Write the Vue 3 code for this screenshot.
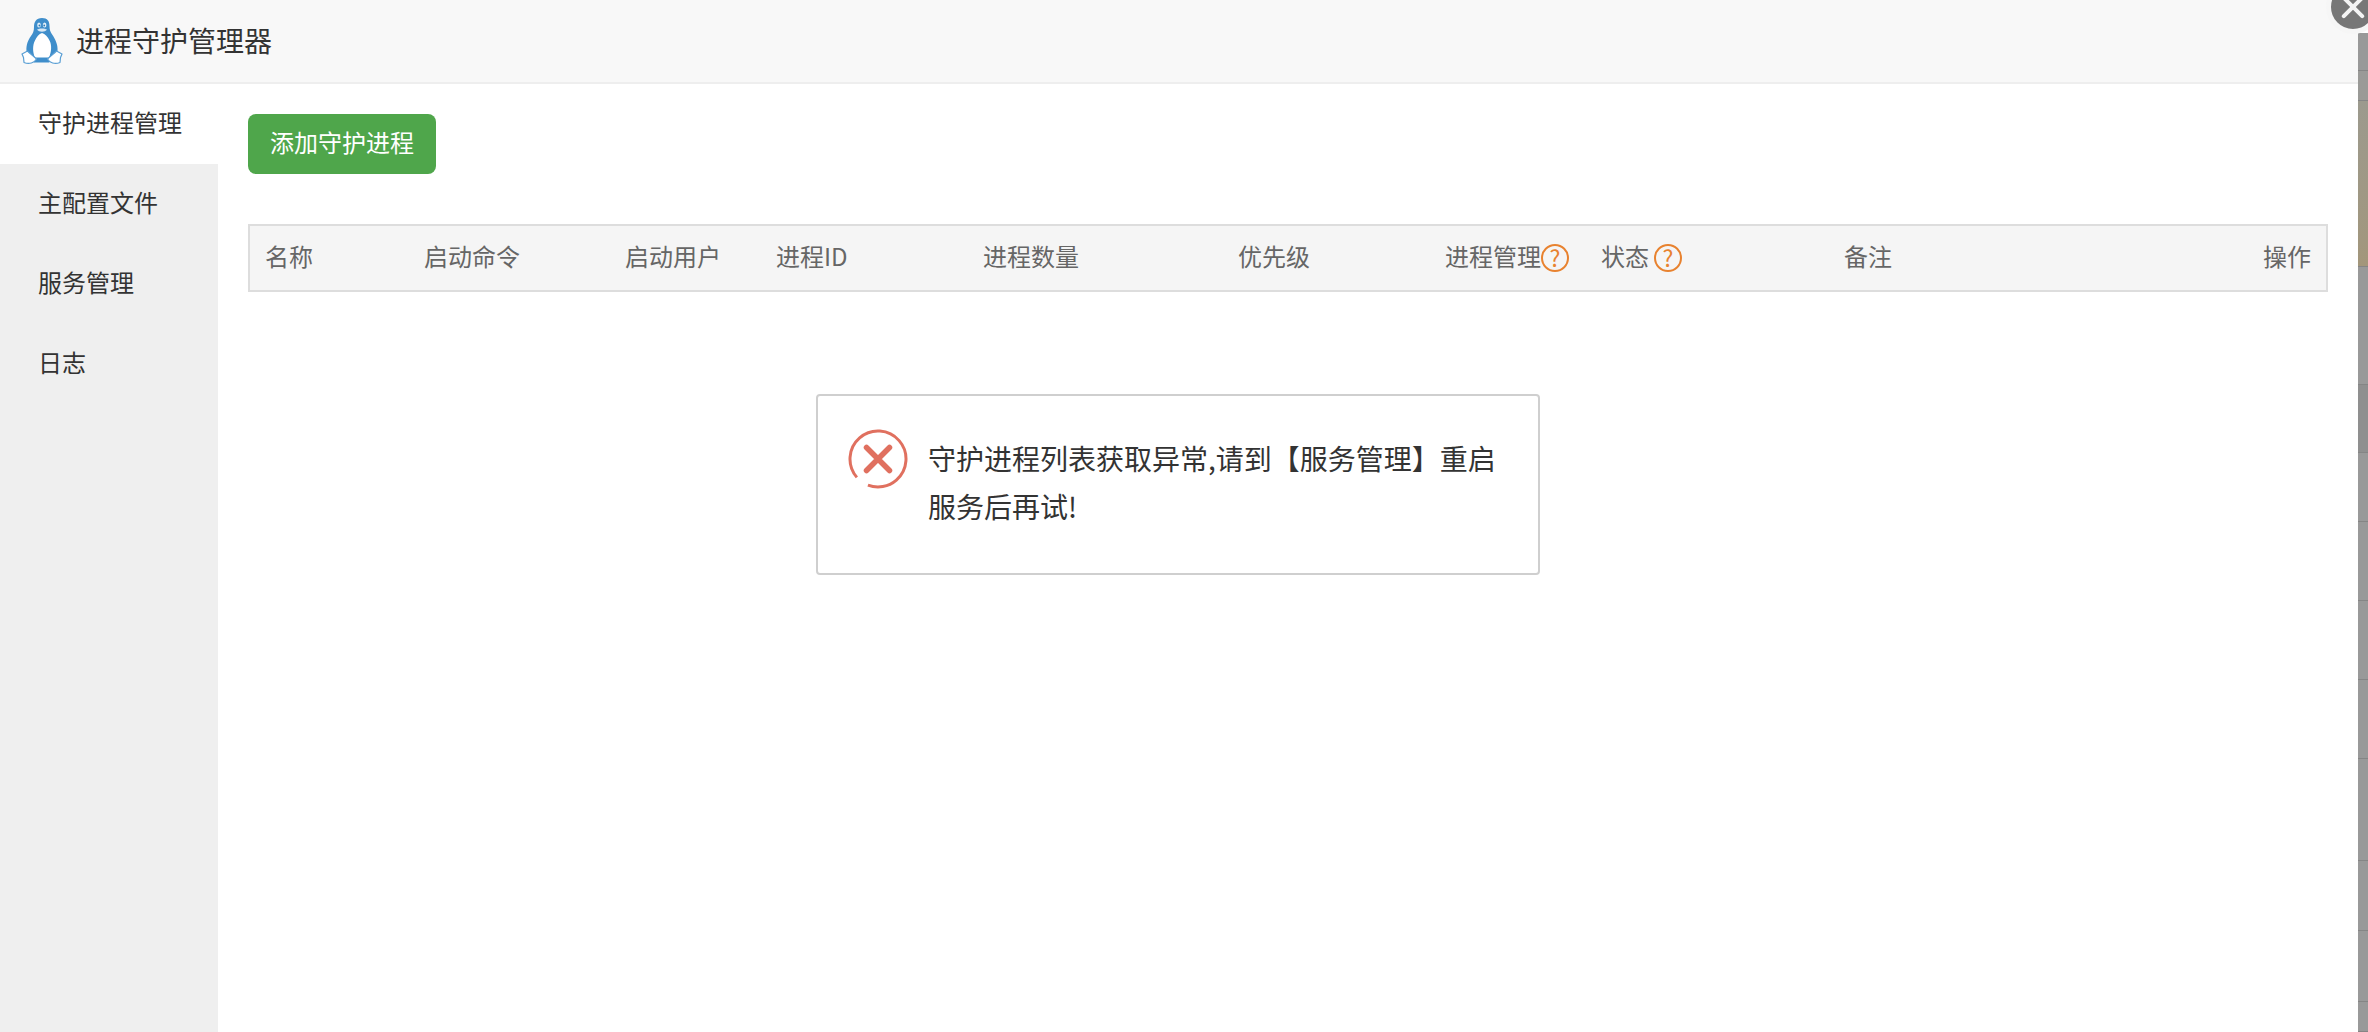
<script setup>
const menu = ['守护进程管理', '主配置文件', '服务管理', '日志']
const cols = [
  { label: '名称' },
  { label: '启动命令' },
  { label: '启动用户' },
  { label: '进程ID' },
  { label: '进程数量' },
  { label: '优先级' },
  { label: '进程管理', help: true },
  { label: '状态', help: true, gap: true },
  { label: '备注' },
  { label: '操作', right: true }
]
const strip = [
  { h: 38, c: '#999999' },
  { h: 30, c: 'linear-gradient(#9a9a98,#9a9a96)' },
  { h: 166, c: 'linear-gradient(#9c9a8e,#a1977f 85%,#a3967a)' },
  { h: 118, c: '#999999' },
  { h: 68, c: '#8f8f8f' },
  { h: 69, c: '#999999' },
  { h: 79, c: '#999999' },
  { h: 79, c: '#999999' },
  { h: 79, c: '#999999' },
  { h: 102, c: '#999999' },
  { h: 70, c: '#999999' },
  { h: 71, c: '#999999' },
  { h: 30, c: '#999999' }
]
</script>

<template>
  <div class="page">
    <div class="dialog">
      <header class="top">
        <svg class="logo" viewBox="0 0 42 48" width="42" height="48">
          <path fill="#3f8ecb" d="M21 1C15 1 13 5 13 10C13 14 12 16 10 19C7 23 5 28 5.500 34L13 45.500H28L36.500 34C37 27 34 22 31.500 18C29.500 15 28.500 13 28.500 9C28.500 4 26.500 1 21 1Z" />
          <path fill="#fff" d="M21 16C18 17 15.500 20 14 23.500C11.500 28 11.500 35 14 40.500L28 40.500C30.500 35 31 28 28.500 23.500C27 20 24 17 21 16Z" />
          <ellipse cx="18" cy="8" rx="1.800" ry="2.500" fill="#e3eff8" />
          <ellipse cx="23.600" cy="8" rx="1.800" ry="2.500" fill="#e3eff8" />
          <circle cx="18.400" cy="8.500" r="0.900" fill="#2f7cb8" />
          <circle cx="23.200" cy="8.500" r="0.900" fill="#2f7cb8" />
          <path fill="#d8e8f5" d="M16 12.500C18.500 11 23.500 11 26 12.500C24 15.500 18 15.500 16 12.500Z" />
          <path fill="#fff" stroke="#5a9fd4" stroke-width="1.200" stroke-linejoin="round" d="M1 37L6.500 34C9 36.500 13 39.500 15.500 42C13.500 46 8 47.500 3 45.500L2.500 40.500Z" />
          <path fill="#fff" stroke="#5a9fd4" stroke-width="1.200" stroke-linejoin="round" d="M41 37L35.500 34C33 36.500 29 39.500 26.500 42C28.500 46 34 47.500 39 45.500L39.500 40.500Z" />
        </svg>
        <span class="title">进程守护管理器</span>
      </header>
      <div class="body">
        <nav class="side">
          <div v-for="(m, i) in menu" :key="m" class="item" :class="{ on: i === 0 }">{{ m }}</div>
        </nav>
        <main class="main">
          <button class="add">添加守护进程</button>
          <div class="thead">
            <div v-for="c in cols" :key="c.label" class="th" :class="{ right: c.right, gap: c.gap }">
              <span class="lb">{{ c.label }}</span>
              <span v-if="c.help" class="help">?</span>
            </div>
          </div>
        </main>
      </div>
      <div class="toast">
        <svg class="err" viewBox="0 0 60 60" width="60" height="60">
          <circle cx="30" cy="30" r="28" fill="none" stroke="#e0705f" stroke-width="3" stroke-dasharray="162 14" transform="rotate(139 30 30)" />
          <path fill="none" stroke="#e0705f" stroke-width="5.500" stroke-linecap="round" d="M18.500 18.500L41.500 41.500M41.500 18.500L18.500 41.500" />
        </svg>
        <p class="msg">守护进程列表获取异常,请到【服务管理】重启服务后再试!</p>
      </div>
    </div>
    <div class="strip">
      <div v-for="(s, i) in strip" :key="i" class="seg" :style="{ height: s.h + 'px', background: s.c }"></div>
    </div>
    <div class="close"><span class="x"></span></div>
  </div>
</template>

<style>
html, body { background: #fff; overflow: hidden; }
</style>

<style scoped>
.page {
  position: relative;
  display: flex;
  width: 2368px;
  height: 1032px;
  overflow: hidden;
  font-family: "Noto Sans CJK SC", "Noto Sans", sans-serif;
  color: #333;
}
.dialog {
  position: relative;
  display: flex;
  flex-direction: column;
  width: 2358px;
  background: #fff;
}
.top {
  display: flex;
  align-items: center;
  box-sizing: border-box;
  height: 84px;
  padding-left: 21px;
  background: #f8f8f8;
  border-bottom: 2px solid #eee;
}
.logo { margin-right: 13px; }
.title { font-size: 28px; line-height: 40px; padding-bottom: 2px; }
.body { display: flex; flex: 1; }
.side { width: 218px; background: #efefef; }
.item {
  height: 80px;
  padding-left: 38px;
  font-size: 24px;
  line-height: 75px;
}
.item.on { background: #fff; }
.main { flex: 1; padding: 30px 30px 0; }
.add {
  display: block;
  width: 188px;
  height: 60px;
  padding: 0 0 5px;
  border: 0;
  border-radius: 8px;
  background: #4fa64b;
  color: #fff;
  font: inherit;
  font-size: 24px;
}
.thead {
  display: grid;
  grid-template-columns: 159px 201px 151px 207px 255px 207px 156px 243px 1fr 100px;
  align-items: center;
  box-sizing: border-box;
  height: 68px;
  margin-top: 50px;
  padding: 0 15px;
  background: #f5f5f5;
  border: 2px solid #ddd;
  color: #666;
  font-size: 24px;
}
.th { display: flex; align-items: center; }
.th.right { justify-content: flex-end; }
.th.gap .help { margin-left: 5px; }
.lb { padding-bottom: 5px; }
.help {
  display: flex;
  align-items: center;
  justify-content: center;
  box-sizing: border-box;
  width: 28px;
  height: 28px;
  padding-bottom: 1px;
  border: 2px solid #e8822f;
  border-radius: 50%;
  color: #e8822f;
  font-size: 23px;
  line-height: 1;
}
.toast {
  position: absolute;
  left: 816px;
  top: 394px;
  display: flex;
  box-sizing: border-box;
  width: 724px;
  height: 181px;
  padding: 33px 40px 0 30px;
  background: #fff;
  border: 2px solid #cfcfcf;
  border-radius: 4px;
}
.err { flex: none; margin-right: 20px; }
.msg {
  margin: 5px 0 0;
  font-size: 28px;
  line-height: 48px;
  color: #333;
}
.strip { width: 10px; margin-top: 33px; }
.seg { box-sizing: border-box; border-bottom: 1px solid #858585; }
.close {
  position: absolute;
  left: 2326px;
  top: -20px;
  display: flex;
  align-items: center;
  justify-content: center;
  box-sizing: content-box;
  width: 44px;
  height: 44px;
  border: 5px solid #f6f6f6;
  border-radius: 50%;
  background: #777;
}
.x {
  position: relative;
  display: block;
  width: 30px;
  height: 30px;
}
.x::before, .x::after {
  content: "";
  position: absolute;
  left: 13px;
  top: 0;
  width: 4px;
  height: 30px;
  border-radius: 2px;
  background: #f4f4f4;
}
.x::before { transform: rotate(45deg); }
.x::after { transform: rotate(-45deg); }
</style>
